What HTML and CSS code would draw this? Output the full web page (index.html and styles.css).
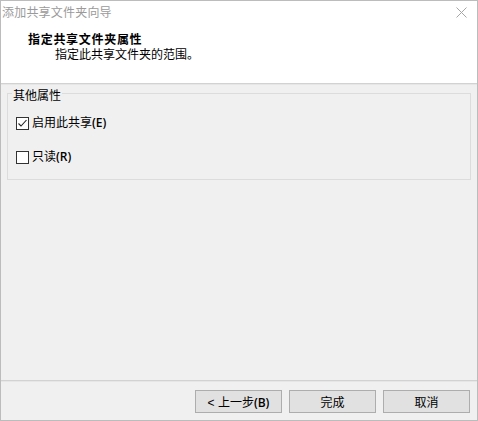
FILE: index.html
```html
<!DOCTYPE html>
<html lang="zh-CN">
<head>
<meta charset="utf-8">
<title>添加共享文件夹向导</title>
<link rel="stylesheet" href="styles.css">
</head>
<body>
<div class="win">
  <div class="top">
    <div class="titlebar">
      <span class="title">添加共享文件夹向导</span>
      <svg class="close" width="11" height="11" viewBox="0 0 11 11"><path d="M0.5 0.5L10.5 10.5M10.5 0.5L0.5 10.5" stroke="#a6a6a6" stroke-width="1" fill="none"/></svg>
    </div>
    <div class="head">
      <div class="head-title">指定共享文件夹属性</div>
      <div class="head-sub">指定此共享文件夹的范围。</div>
    </div>
  </div>
  <div class="rule"></div>
  <div class="body">
    <div class="group">
      <span class="legend">其他属性</span>
      <div class="row">
        <span class="cb">
          <svg width="11" height="11" viewBox="0 0 11 11"><path d="M1.5 5.5L4 8L9.5 2" stroke="#222" stroke-width="1.1" fill="none"/></svg>
        </span>
        <span class="lbl">启用此共享<span class="acc">(E)</span></span>
      </div>
      <div class="row">
        <span class="cb"></span>
        <span class="lbl">只读<span class="acc">(R)</span></span>
      </div>
    </div>
    <div class="footer">
      <div class="btns">
        <button class="btn">&lt; 上一步<span class="acc">(B)</span></button>
        <button class="btn">完成</button>
        <button class="btn">取消</button>
      </div>
    </div>
  </div>
</div>
</body>
</html>
```
FILE: styles.css
```css
html, body {
  margin: 0;
  padding: 0;
  background: #f0f0f0;
}
body {
  font-family: "Liberation Sans", "Noto Sans CJK SC", sans-serif;
  font-size: 12px;
  color: #000;
}
.win {
  width: 478px;
  height: 421px;
  box-sizing: border-box;
  border: 1px solid #bcbcbc;
  display: flex;
  flex-direction: column;
  background: #f0f0f0;
}
.top {
  background: #fff;
  height: 82px;
}
.titlebar {
  height: 24px;
  display: flex;
  align-items: center;
  justify-content: space-between;
  padding: 0 10px 0 1px;
}
.title {
  color: #9a9a9a;
  font-size: 12px;
  line-height: 24px;
  letter-spacing: 0.2px;
}
.close {
  display: block;
  margin-top: -2px;
}
.head {
  padding-top: 8px;
}
.head-title {
  padding-left: 27px;
  font-weight: bold;
  line-height: 15px;
  font-size: 12px;
  letter-spacing: 0.7px;
}
.head-sub {
  padding-left: 54px;
  line-height: 15px;
  font-size: 12px;
  letter-spacing: 0;
}
.rule {
  height: 1px;
  border-top: 1px solid #d2d2d2;
  background: #e6e6e6;
}
.body {
  flex: 1;
  display: flex;
  flex-direction: column;
  background: #f0f0f0;
}
.group {
  position: relative;
  margin: 8px 6px 0 6px;
  height: 87px;
  box-sizing: border-box;
  border: 1px solid #dcdcdc;
  padding: 21px 0 0 8px;
  display: flex;
  flex-direction: column;
  gap: 18px;
}
.legend {
  position: absolute;
  top: -5px;
  left: 4px;
  padding: 0 1px;
  background: #f0f0f0;
  line-height: 14px;
}
.row {
  display: flex;
  align-items: center;
  height: 16px;
}
.cb {
  width: 13px;
  height: 13px;
  box-sizing: border-box;
  border: 1px solid #333;
  background: #fff;
  display: flex;
  align-items: center;
  justify-content: center;
}
.cb svg {
  display: block;
}
.lbl {
  margin-left: 3px;
  line-height: 16px;
}
.acc {
  font-family: "Open Sans", "Liberation Sans", sans-serif;
  font-weight: 600;
  font-size: 12px;
}
.footer {
  margin-top: auto;
  border-top: 1px solid #d2d2d2;
  box-shadow: inset 0 1px 0 #e6e6e6;
  padding: 9px 7px 7px 0;
}
.btns {
  display: flex;
  justify-content: flex-end;
  gap: 7px;
}
.btn {
  width: 87px;
  height: 23px;
  box-sizing: border-box;
  border: 1px solid #adadad;
  background: #e1e1e1;
  font-family: "Liberation Sans", "Noto Sans CJK SC", sans-serif;
  font-size: 12px;
  color: #000;
  padding: 0;
  margin: 0;
}
```
